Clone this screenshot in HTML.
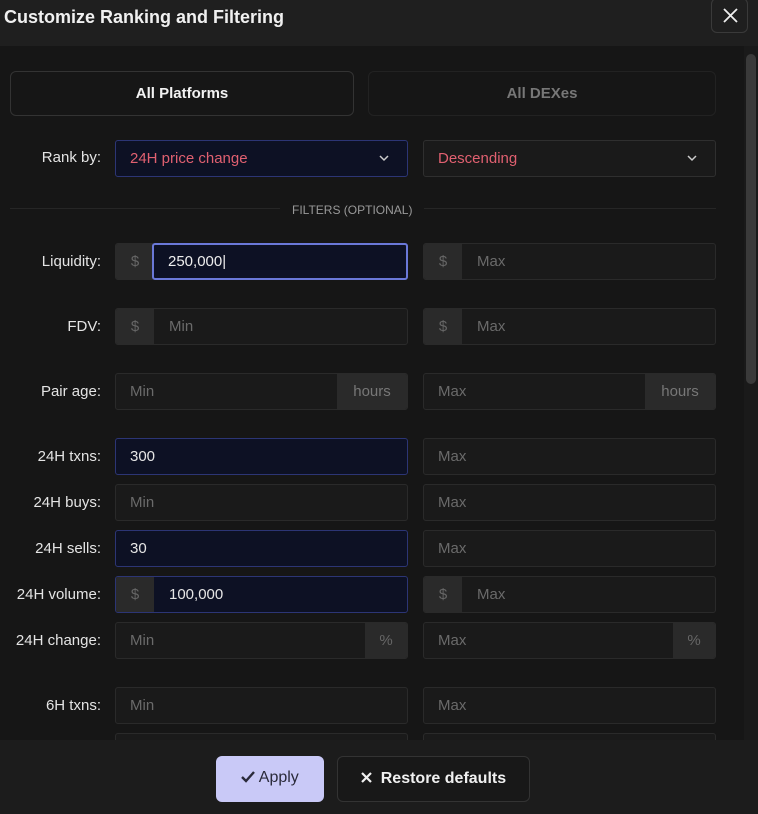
<!DOCTYPE html><html><head><style>
*{box-sizing:border-box;margin:0;padding:0}
body{width:758px;height:814px;background:#161616;font-family:"Liberation Sans",sans-serif;position:relative;overflow:hidden;color:#ddd}
.hdr{position:absolute;left:0;top:0;width:758px;height:46px;background:#1f1f1f}
.hdr h1{position:absolute;left:4px;top:7px;font-size:18px;font-weight:bold;color:#f0f0f0}
.x{position:absolute;left:711px;top:-2px;width:37px;height:35px;border:1px solid #3a3a3a;border-radius:6px}
.tab{position:absolute;top:71px;height:45px;border:1px solid #2c2c2c;border-radius:6px;text-align:center;line-height:43px;font-size:15px;font-weight:bold}
.lbl{position:absolute;right:657px;font-size:15px;color:#e4e4e4;text-align:right;white-space:nowrap}
.in{position:absolute;height:37px;border:1px solid #2a2a2a;border-radius:3px;background:#1a1a1a;font-size:15px;color:#6a6a6a;overflow:hidden}
.in span{position:absolute;top:0;line-height:35px}
.pre{position:absolute;top:0;bottom:0;background:#2a2a2a;color:#666;text-align:center;line-height:35px}
.act{background:#0d1124;border-color:#2c3575;color:#e6e6e6}
.chev{position:absolute;right:18px;top:14px}
.sb{position:absolute;left:744px;top:46px;width:14px;height:694px;background:#1a1a1a}
.sb div{position:absolute;left:2px;top:8px;width:10px;height:330px;background:#3a3a3a;border-radius:5px}
.ftr{position:absolute;left:0;top:740px;width:758px;height:74px;background:#1c1c1c}
.btn{position:absolute;top:16px;height:46px;border-radius:6px;font-size:16px;line-height:44px;text-align:center}
</style></head><body>
<div class="hdr"><h1>Customize Ranking and Filtering</h1><div class="x"><svg width="37" height="35" viewBox="0 0 37 35"><path d="M12 10L25 23M25 10L12 23" stroke="#eee" stroke-width="1.8"/></svg></div></div>
<div class="tab" style="left:10px;width:344px;color:#f2f2f2;border-color:#333">All Platforms</div>
<div class="tab" style="left:368px;width:348px;color:#777;border-color:#222">All DEXes</div>

<div class="lbl" style="top:149px">Rank by:</div>
<div class="in act" style="left:115px;top:140px;width:293px;color:#e06070"><span style="left:14px">24H price change</span><svg class="chev" width="10" height="7"><path d="M1 1L5 5L9 1" stroke="#ccc" stroke-width="1.5" fill="none"/></svg></div>
<div class="in" style="left:423px;top:140px;width:293px;color:#e06070;border-color:#2f2f2f"><span style="left:14px">Descending</span><svg class="chev" width="10" height="7"><path d="M1 1L5 5L9 1" stroke="#ccc" stroke-width="1.5" fill="none"/></svg></div>

<div style="position:absolute;left:10px;top:208px;width:706px;height:1px;background:#262626"></div>
<div style="position:absolute;left:280px;top:203px;padding:0 12px;background:#161616;font-size:12px;color:#999">FILTERS (OPTIONAL)</div>

<div class="lbl" style="top:253px">Liquidity:</div>
<div class="in" style="left:115px;top:243px;width:38px;border-radius:3px 0 0 3px"><div class="pre" style="left:0;width:38px">$</div></div>
<div class="in" style="left:152px;top:243px;width:256px;border:2px solid #6a78d8;background:#0d1124;border-radius:3px"><span style="left:14px;color:#eee;line-height:33px">250,000|</span></div>
<div class="in" style="left:423px;top:243px;width:293px"><div class="pre" style="left:0;width:38px">$</div><span style="left:53px">Max</span></div>

<div class="lbl" style="top:318px">FDV:</div>
<div class="in" style="left:115px;top:308px;width:293px"><div class="pre" style="left:0;width:38px">$</div><span style="left:53px">Min</span></div>
<div class="in" style="left:423px;top:308px;width:293px"><div class="pre" style="left:0;width:38px">$</div><span style="left:53px">Max</span></div>

<div class="lbl" style="top:383px">Pair age:</div>
<div class="in" style="left:115px;top:373px;width:293px"><span style="left:14px">Min</span><div class="pre" style="right:0;width:70px;color:#777">hours</div></div>
<div class="in" style="left:423px;top:373px;width:293px"><span style="left:14px">Max</span><div class="pre" style="right:0;width:70px;color:#777">hours</div></div>

<div class="lbl" style="top:448px">24H txns:</div>
<div class="in act" style="left:115px;top:438px;width:293px"><span style="left:14px">300</span></div>
<div class="in" style="left:423px;top:438px;width:293px"><span style="left:14px">Max</span></div>

<div class="lbl" style="top:494px">24H buys:</div>
<div class="in" style="left:115px;top:484px;width:293px"><span style="left:14px">Min</span></div>
<div class="in" style="left:423px;top:484px;width:293px"><span style="left:14px">Max</span></div>

<div class="lbl" style="top:540px">24H sells:</div>
<div class="in act" style="left:115px;top:530px;width:293px"><span style="left:14px">30</span></div>
<div class="in" style="left:423px;top:530px;width:293px"><span style="left:14px">Max</span></div>

<div class="lbl" style="top:586px">24H volume:</div>
<div class="in act" style="left:115px;top:576px;width:293px"><div class="pre" style="left:0;width:38px">$</div><span style="left:53px">100,000</span></div>
<div class="in" style="left:423px;top:576px;width:293px"><div class="pre" style="left:0;width:38px">$</div><span style="left:53px">Max</span></div>

<div class="lbl" style="top:632px">24H change:</div>
<div class="in" style="left:115px;top:622px;width:293px"><span style="left:14px">Min</span><div class="pre" style="right:0;width:42px">%</div></div>
<div class="in" style="left:423px;top:622px;width:293px"><span style="left:14px">Max</span><div class="pre" style="right:0;width:42px">%</div></div>

<div class="lbl" style="top:697px">6H txns:</div>
<div class="in" style="left:115px;top:687px;width:293px"><span style="left:14px">Min</span></div>
<div class="in" style="left:423px;top:687px;width:293px"><span style="left:14px">Max</span></div>
<div class="in" style="left:115px;top:733px;width:293px"></div>
<div class="in" style="left:423px;top:733px;width:293px"></div>

<div class="sb"><div></div></div>
<div class="ftr">
<div class="btn" style="left:216px;width:108px;background:#c9c9f7;color:#2a2a3a"><svg width="14" height="12" style="vertical-align:-1px"><path d="M1 6L5 10L13 1" stroke="#2a2a3a" stroke-width="2.4" fill="none"/></svg> Apply</div>
<div class="btn" style="left:337px;width:193px;border:1px solid #333;background:#181818;color:#f0f0f0;font-weight:bold"><svg width="11" height="11"><path d="M1 1L10 10M10 1L1 10" stroke="#f0f0f0" stroke-width="2.2"/></svg>&nbsp; Restore defaults</div>
</div>
</body></html>
